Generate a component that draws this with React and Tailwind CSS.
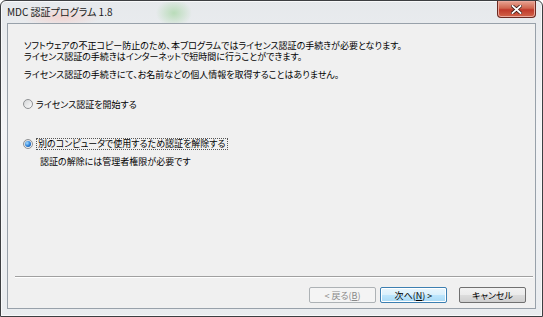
const jp = "font-['Noto_Sans_CJK_JP',sans-serif] [font-feature-settings:'palt']";

function Radio({ checked }) {
  return (
    <span className="w-[10px] h-[10px] rounded-full border border-[#8e9093] bg-[linear-gradient(135deg,#d4d6d8,#fbfbfb)] flex items-center justify-center shrink-0">
      {checked && (
        <span className="w-[6px] h-[6px] rounded-full bg-[radial-gradient(circle_at_35%_35%,#a6dcff,#2a7fd8_55%,#0b3f86)]" />
      )}
    </span>
  );
}

function Button({ children, disabled, primary, className = "" }) {
  let tone = "border-[#707070] bg-[linear-gradient(#f2f2f2,#ebebeb_50%,#dddddd_50%,#cfcfcf)] text-black";
  if (disabled) tone = "border-[#adb2b5] bg-[#f4f4f4] text-[#8a8a8a]";
  if (primary)
    tone = "border-[#3c7fb1] bg-[linear-gradient(#eaf6fd,#d9f0fc_50%,#bee6fd_50%,#a7d9f5)] text-black shadow-[inset_0_0_0_1px_#ffffff]";
  return (
    <div
      className={`w-[67px] h-[16px] rounded-[2px] border flex items-center justify-center text-[9px] leading-none ${tone} ${className}`}
    >
      {children}
    </div>
  );
}

export default function App() {
  return (
    <div
      className={`w-[543px] h-[317px] rounded-t-[6px] border border-[#3d3f42] bg-[radial-gradient(ellipse_18px_14px_at_173px_12px,#b9dcb9,transparent),radial-gradient(ellipse_40px_10px_at_60px_16px,#f1d3d0,transparent),linear-gradient(#e6e9ec,#f3f4f6_40%,#e9ecef)] shadow-[inset_0_0_0_1px_#f8f9fa] flex flex-col text-black ${jp}`}
    >
      <div className="h-[22px] flex items-start justify-between shrink-0">
        <span className="pl-[6px] pt-[5px] text-[10px] leading-[12px] text-[#1a1a1a]">MDC 認証プログラム 1.8</span>
        <div className="mr-[6px] w-[39px] h-[17px] rounded-b-[4px] border border-t-0 border-[#6b2a22] bg-[linear-gradient(#e8a493,#d0664f_45%,#c0392b_55%,#d2654a)] shadow-[inset_0_0_0_1px_#eba89c] flex items-center justify-center">
          <svg width="11" height="9" viewBox="0 0 11 9">
            <path d="M1.5 1 L9.5 8 M9.5 1 L1.5 8" stroke="#3a1b16" strokeWidth="3.4" strokeLinecap="square" />
            <path d="M1.5 1 L9.5 8 M9.5 1 L1.5 8" stroke="#ffffff" strokeWidth="1.8" strokeLinecap="square" />
          </svg>
        </div>
      </div>

      <div className="mx-[6px] ml-[6px] mb-[7px] flex-1 border border-[#98a1aa] bg-[#f0f0f0] flex flex-col">
        <div className="pl-[16px] pt-[16px] text-[9px] leading-[11px]">
          <p>ソフトウェアの不正コピー防止のため、本プログラムではライセンス認証の手続きが必要となります。</p>
          <p>ライセンス認証の手続きはインターネットで短時間に行うことができます。</p>
          <p className="mt-[7px]">ライセンス認証の手続きにて、お名前などの個人情報を取得することはありません。</p>

          <div className="mt-[18px] h-[12px] flex items-center gap-[3px] -ml-[1px]">
            <Radio />
            <span>ライセンス認証を開始する</span>
          </div>

          <div className="mt-[28px] h-[12px] flex items-center gap-[3px] -ml-[1px]">
            <Radio checked />
            <span className="border border-dotted border-[#555] px-[1px] leading-[10px]">
              別のコンピュータで使用するため認証を解除する
            </span>
          </div>
          <p className="mt-[6px] pl-[16px]">認証の解除には管理者権限が必要です</p>
        </div>

        <div className="mt-auto ml-[7px] mr-[2px] h-[2px] border-t border-[#a0a0a0] border-b border-b-white" />
        <div className="mt-[9px] mb-[5px] pr-[9px] flex justify-end">
          <Button disabled>
            &lt; 戻る(<span className="underline">B</span>)
          </Button>
          <Button primary className="ml-[4px]">
            次へ(<span className="underline">N</span>) &gt;
          </Button>
          <Button className="ml-[12px]">キャンセル</Button>
        </div>
      </div>
    </div>
  );
}
